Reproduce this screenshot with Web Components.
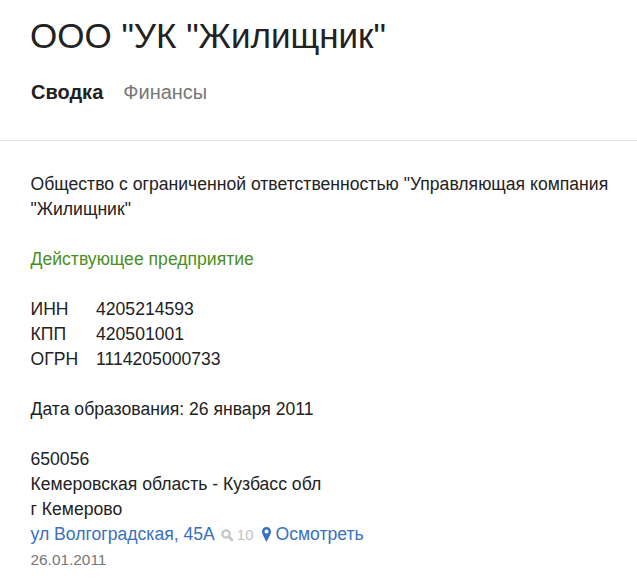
<!DOCTYPE html>
<html lang="ru">
<head>
<meta charset="utf-8">
<title>ООО "УК "Жилищник"</title>
<style>
  html, body { margin: 0; background: #fff; }
  body { font-family: "Liberation Sans", Arial, sans-serif; color: #222; overflow: hidden; }
</style>
</head>
<body>
<company-card>
  <company-header title="ООО &quot;УК &quot;Жилищник&quot;"></company-header>
  <company-summary></company-summary>
</company-card>

<script>
const cardTpl = document.createElement('template');
cardTpl.innerHTML = `
  <style>
    :host { display: block; width: 637px; }
  </style>
  <slot></slot>
`;
class CompanyCard extends HTMLElement {
  constructor() {
    super();
    this.attachShadow({mode: 'open'}).appendChild(cardTpl.content.cloneNode(true));
  }
}
customElements.define('company-card', CompanyCard);

const headerTpl = document.createElement('template');
headerTpl.innerHTML = `
  <style>
    :host { display: block; padding: 16px 30px 0 30px; height: 124px; border-bottom: 1px solid #ddd; }
    h1 { margin: 0; font-size: 35px; font-weight: 400; line-height: 40px; color: #222; }
    nav { display: flex; gap: 20px; margin: 24px 0 0 1px; font-size: 20px; line-height: 25px; }
    b { font-weight: 700; color: #222; }
    a { color: #777; text-decoration: none; }
  </style>
  <h1></h1>
  <nav><b>Сводка</b><a href="#">Финансы</a></nav>
`;
class CompanyHeader extends HTMLElement {
  constructor() {
    super();
    this.attachShadow({mode: 'open'}).appendChild(headerTpl.content.cloneNode(true));
    this.shadowRoot.querySelector('h1').textContent = this.getAttribute('title');
  }
}
customElements.define('company-header', CompanyHeader);

const summaryTpl = document.createElement('template');
summaryTpl.innerHTML = `
  <style>
    :host { display: block; padding: 31px 20px 0 30.5px; font-size: 17.6px; line-height: 25px; color: #222; }
    p { margin: 0 0 25px 0; }
    .status { color: #4a8f24; }
    .codes { display: grid; grid-template-columns: 65.5px auto; justify-content: start; margin-bottom: 25px; }
    a { color: #3a70c0; text-decoration: none; }
    .address { margin: 0; }
    .street { display: flex; align-items: center; }
    .hits { display: inline-flex; align-items: center; gap: 4px; margin-left: 6px; font-size: 15px; color: #c4c4c4; }
    .hits svg { display: block; }
    .pin { display: block; margin: -1px 5px 0 8px; }
    .date { font-size: 15.4px; line-height: 26px; color: #777; }
  </style>
  <p>Общество с ограниченной ответственностью "Управляющая компания "Жилищник"</p>
  <p class="status">Действующее предприятие</p>
  <div class="codes">
    <span>ИНН</span><span>4205214593</span>
    <span>КПП</span><span>420501001</span>
    <span>ОГРН</span><span>1114205000733</span>
  </div>
  <p>Дата образования: 26 января 2011</p>
  <div class="address">
    <div>650056</div>
    <div>Кемеровская область - Кузбасс обл</div>
    <div>г Кемерово</div>
    <div class="street">
      <a href="#">ул Волгоградская, 45А</a>
      <span class="hits">
        <svg width="12" height="12" viewBox="0 0 12 12"><circle cx="5" cy="5" r="3.6" fill="none" stroke="#c4c4c4" stroke-width="2.2"/><path d="M7.800 7.800 10.800 10.800" stroke="#c4c4c4" stroke-width="2.800" stroke-linecap="round"/></svg>10</span>
      <svg class="pin" width="9" height="15" viewBox="0 0 9 15"><path fill="#3a70c0" fill-rule="evenodd" d="M4.500 0A4.500 4.500 0 0 1 9 4.500C9 7.500 6.500 10.500 4.500 15 2.500 10.500 0 7.500 0 4.500A4.500 4.500 0 0 1 4.500 0zm0 2.500a2 2 0 1 0 0 4 2 2 0 0 0 0-4z"/></svg>
      <a href="#">Осмотреть</a>
    </div>
    <div class="date">26.01.2011</div>
  </div>
`;
class CompanySummary extends HTMLElement {
  constructor() {
    super();
    this.attachShadow({mode: 'open'}).appendChild(summaryTpl.content.cloneNode(true));
  }
}
customElements.define('company-summary', CompanySummary);
</script>
</body>
</html>
